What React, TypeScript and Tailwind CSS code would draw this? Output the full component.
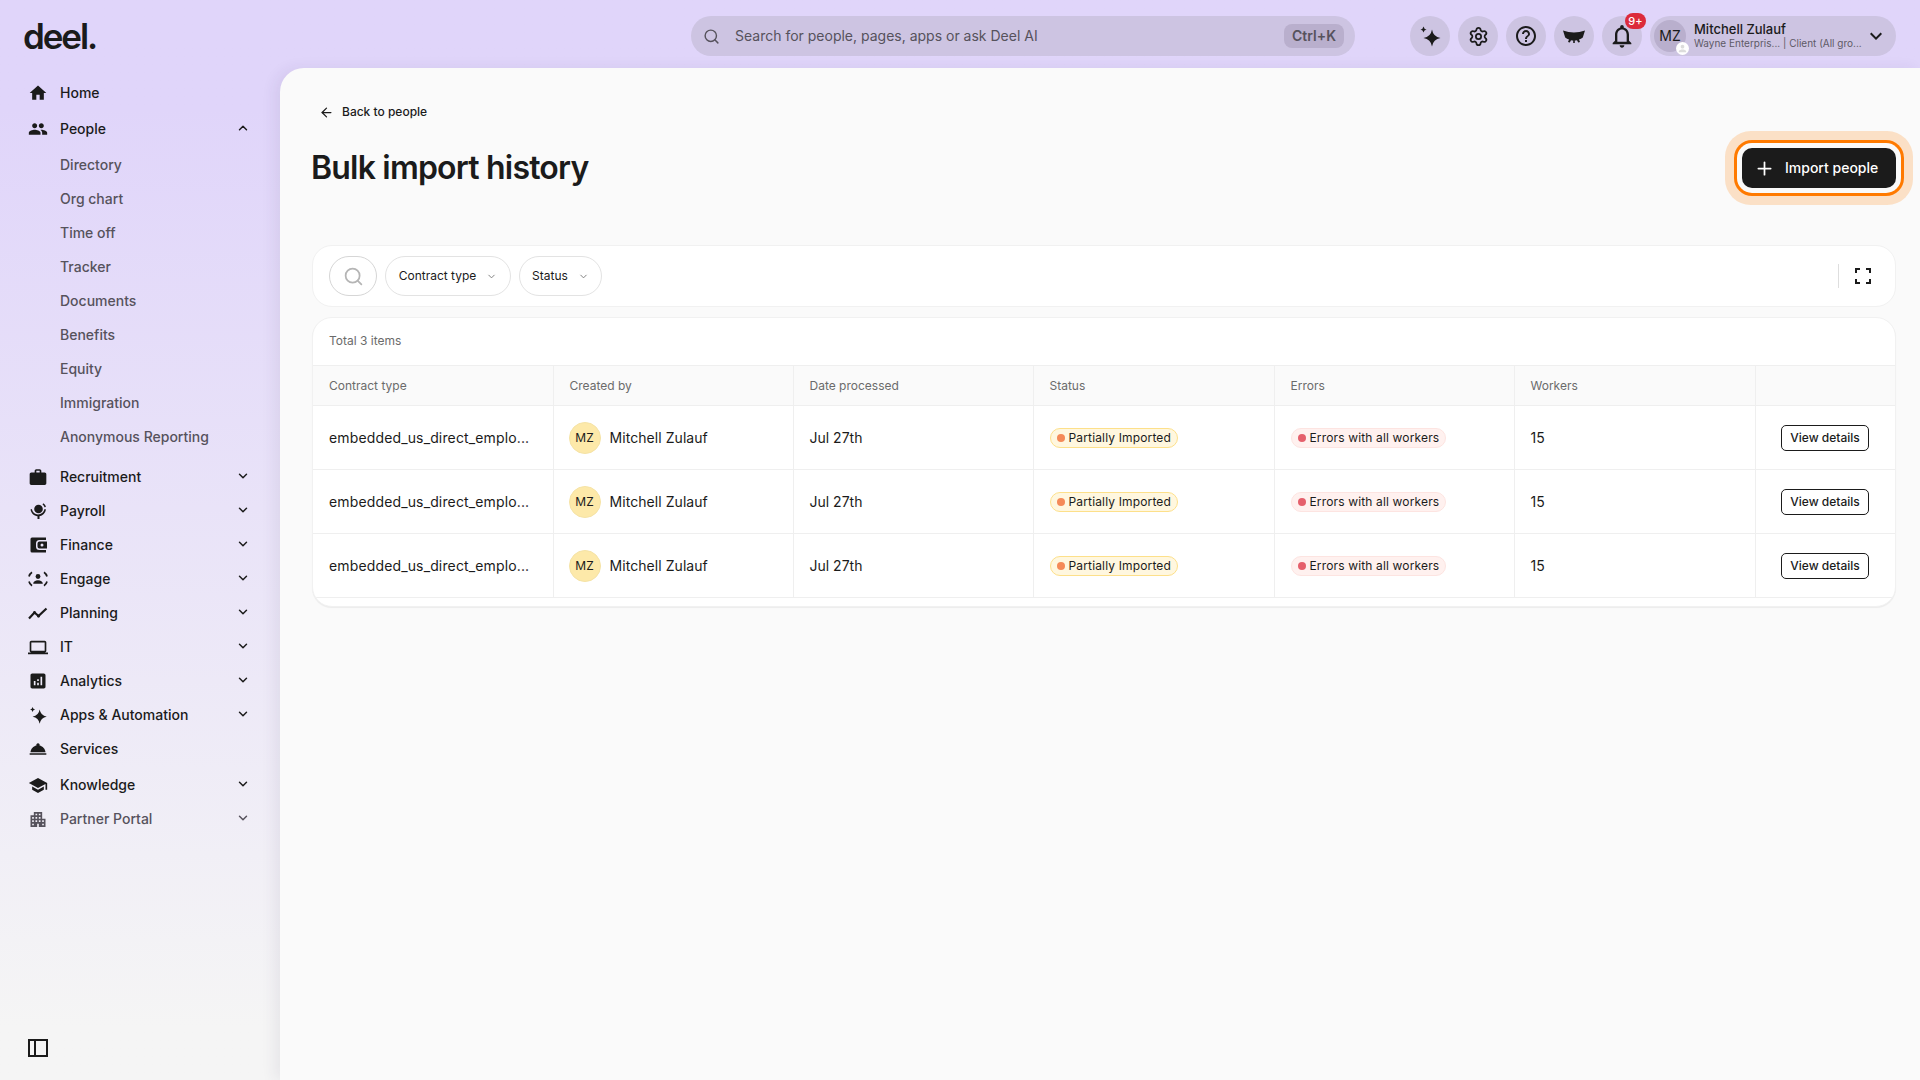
import React from "react";
import {
  MdHome,
  MdPeople,
  MdWork,
  MdLaptop,
  MdAnalytics,
  MdRoomService,
  MdSchool,
  MdApartment,
  MdHelpOutline,
  MdNotificationsNone,
  MdPerson,
  MdKeyboardArrowDown,
} from "react-icons/md";
import { ChevronDown, ChevronUp, Search, Settings, ArrowLeft, Plus } from "lucide-react";

const Sparkles = ({ size = 20 }: { size?: number }) => (
  <svg width={size} height={size} viewBox="0 0 24 24" fill="currentColor">
    <path d="M14 5.500Q15.200 12.800 22.500 14 15.200 15.200 14 22.500 12.800 15.200 5.500 14 12.800 12.800 14 5.500z" />
    <path d="M5.500 2.500Q6 5 8.500 5.500 6 6 5.500 8.500 5 6 2.500 5.500 5 5 5.500 2.500z" />
  </svg>
);

const PayrollIcon = () => (
  <svg width={20} height={20} viewBox="0 0 20 20" fill="currentColor">
    <circle cx="10.500" cy="8" r="4.300" />
    <path d="M2.500 8.500c.6 3.800 3.600 6.300 7 6.800V18h2v-2.700c3.300-.6 5.900-3 6.500-6.800l-1.500-.4c-.8 3.300-3.300 5.400-6.500 5.400-3.100 0-5.500-2-6.200-5.400z" />
    <path d="M15.200 2.300c1.400.8 2.400 2.100 2.700 3.700l-1.400.3c-.3-1.100-1-2.200-2-2.800z" />
  </svg>
);

const WalletIcon = () => (
  <svg width={20} height={20} viewBox="0 0 20 20" fill="currentColor">
    <path d="M4 2.500h14v2.500h-6.500A3.500 3.500 0 0 0 8 8.500v3a3.500 3.500 0 0 0 3.500 3.500H18v2.500H4A1.500 1.500 0 0 1 2.500 16V4A1.500 1.500 0 0 1 4 2.500z" />
    <path
      fillRule="evenodd"
      d="M11.500 6.500H19v7h-7.500a2 2 0 0 1-2-2v-3a2 2 0 0 1 2-2zm2.500 2a1.500 1.500 0 1 0 0 3 1.500 1.500 0 0 0 0-3z"
    />
  </svg>
);

const EngageIcon = () => (
  <svg width={20} height={20} viewBox="0 0 20 20" fill="none" stroke="currentColor" strokeWidth="1.700">
    <circle cx="10" cy="7.500" r="2.400" fill="currentColor" stroke="none" />
    <path d="M5.200 14.800c0-2.300 2.200-3.600 4.800-3.600s4.800 1.300 4.800 3.600z" fill="currentColor" stroke="none" />
    <path d="M1 7.500c.5-2 1.500-3.300 3-4.300M16 3.200c1.500 1 2.500 2.300 3 4.300M1 12.500c.5 2 1.500 3.300 3 4.300M16 16.800c1.500-1 2.500-2.300 3-4.300" />
  </svg>
);

const PlanningIcon = () => (
  <svg width={20} height={20} viewBox="0 0 20 20" fill="none" stroke="currentColor" strokeWidth="2.200">
    <path d="M1 15.500l5.500-6 4 3.500 8-7.500" />
    <circle cx="6.500" cy="9.500" r="1.500" fill="currentColor" stroke="none" />
    <circle cx="10.500" cy="13" r="1.500" fill="currentColor" stroke="none" />
  </svg>
);

const EyeLash = () => (
  <svg width={24} height={24} viewBox="0 0 24 24" fill="currentColor">
    <path d="M1 6.500Q12 10.500 23 6.500L20.800 13.500Q19 14.800 17 15.500L18 18 16.200 18.500 15 16.200Q13.500 16.600 12.800 16.600L12.800 19H11.200L11.200 16.600Q10 16.500 9 16.200L7.800 18.500 6 18 7 15.500Q5 14.800 3.200 13.500Z" />
  </svg>
);

const PanelIcon = () => (
  <svg width={20} height={20} viewBox="0 0 20 20" fill="none" stroke="currentColor" strokeWidth="2">
    <rect x="1" y="2" width="18" height="16" />
    <path d="M7 2v16" />
  </svg>
);

const FullscreenIcon = () => (
  <svg width={16} height={16} viewBox="0 0 16 16" fill="none" stroke="currentColor" strokeWidth="2">
    <path d="M1 5V1h4M11 1h4v4M15 11v4h-4M5 15H1v-4" />
  </svg>
);

const NavRow = ({
  icon,
  label,
  arrow,
  muted,
}: {
  icon: React.ReactNode;
  label: string;
  arrow?: "up" | "down";
  muted?: boolean;
}) => (
  <div className={`flex h-[34px] items-center pl-7 pr-[30px] ${muted ? "text-[#56525c]" : "text-[#1b1b1b]"}`}>
    <span className="flex w-5 justify-center">{icon}</span>
    <span className="ml-3 flex-1 text-sm font-medium">{label}</span>
    {arrow === "up" && <ChevronUp size={14} strokeWidth={2.5} className="-mt-[2px]" />}
    {arrow === "down" && <ChevronDown size={14} strokeWidth={2.5} className="-mt-[2px]" />}
  </div>
);

const subItems = [
  "Directory",
  "Org chart",
  "Time off",
  "Tracker",
  "Documents",
  "Benefits",
  "Equity",
  "Immigration",
  "Anonymous Reporting",
];

const Sidebar = () => (
  <aside className="flex w-[280px] shrink-0 flex-col pt-2 pb-[22px]">
    <NavRow icon={<MdHome size={24} />} label="Home" />
    <div className="mt-0.5">
      <NavRow icon={<MdPeople size={24} />} label="People" arrow="up" />
    </div>
    <div className="mt-0.5">
      {subItems.map((item) => (
        <div key={item} className="flex h-[34px] items-center pl-[60px] text-sm font-medium text-[#56525c]">
          {item}
        </div>
      ))}
    </div>
    <div className="mt-1.5">
      <NavRow icon={<MdWork size={21} />} label="Recruitment" arrow="down" />
      <NavRow icon={<PayrollIcon />} label="Payroll" arrow="down" />
      <NavRow icon={<WalletIcon />} label="Finance" arrow="down" />
      <NavRow icon={<EngageIcon />} label="Engage" arrow="down" />
      <NavRow icon={<PlanningIcon />} label="Planning" arrow="down" />
      <NavRow icon={<MdLaptop size={23} />} label="IT" arrow="down" />
      <NavRow icon={<MdAnalytics size={22} />} label="Analytics" arrow="down" />
      <NavRow icon={<Sparkles />} label="Apps & Automation" arrow="down" />
      <NavRow icon={<MdRoomService size={22} />} label="Services" />
    </div>
    <div className="mt-0.5">
      <NavRow icon={<MdSchool size={23} />} label="Knowledge" arrow="down" />
      <NavRow icon={<MdApartment size={21} />} label="Partner Portal" arrow="down" muted />
    </div>
    <div className="mt-auto pl-7 text-[#1b1b1b]">
      <PanelIcon />
    </div>
  </aside>
);

const RoundButton = ({ children }: { children: React.ReactNode }) => (
  <button className="relative flex h-10 w-10 items-center justify-center rounded-full bg-[#cdc4e2] text-[#1b1b1b]">
    {children}
  </button>
);

const TopBar = () => (
  <header className="flex h-[68px] shrink-0 items-start pt-4 pr-6 pl-6">
    <div className="-ml-px w-[668px] text-[35px] leading-10 font-semibold tracking-[-0.06em] text-[#1b1b1b]">deel.</div>
    <div className="flex h-10 w-[664px] items-center rounded-full bg-[#cdc4e2] pr-[11px] pl-[12px] text-[#56525c]">
      <Search size={17} strokeWidth={2} />
      <span className="ml-[15px] flex-1 text-sm">Search for people, pages, apps or ask Deel AI</span>
      <span className="flex h-6 w-[60px] items-center justify-center rounded-lg bg-[#b9afcd] text-sm font-semibold">
        Ctrl+K
      </span>
    </div>
    <div className="ml-auto flex items-center gap-2">
      <RoundButton>
        <Sparkles size={24} />
      </RoundButton>
      <RoundButton>
        <Settings size={21} strokeWidth={2} />
      </RoundButton>
      <RoundButton>
        <MdHelpOutline size={24} />
      </RoundButton>
      <RoundButton>
        <EyeLash />
      </RoundButton>
      <RoundButton>
        <MdNotificationsNone size={28} />
        <span className="absolute -top-[3px] left-[23px] flex h-4 w-[21px] items-center justify-center rounded-full bg-[#dc2b3b] text-[11px] font-medium text-white">
          9+
        </span>
      </RoundButton>
      <div className="relative flex h-10 w-[246px] items-center rounded-full bg-[#cdc4e2] pl-1 text-[#1b1b1b]">
        <span className="flex h-8 w-8 shrink-0 items-center justify-center rounded-full bg-[#b9afcd] text-sm">MZ</span>
        <span className="absolute top-[26px] left-[26px] flex h-[13px] w-[13px] items-center justify-center rounded-full bg-white text-[#dcdcdc]">
          <MdPerson size={11} />
        </span>
        <div className="-mt-px ml-2 w-[168px] shrink-0">
          <div className="text-[13px] leading-4 font-medium">Mitchell Zulauf</div>
          <div className="text-[10px] leading-[13px] whitespace-nowrap text-[#5e5a66]">Wayne Enterpris... | Client (All gro...</div>
        </div>
        <MdKeyboardArrowDown size={24} className="ml-[2px]" />
      </div>
    </div>
  </header>
);

const Th = ({ children, last }: { children?: React.ReactNode; last?: boolean }) => (
  <th className={`h-10 border-b border-[#efefef] px-4 text-left text-xs font-normal text-[#6b6b6b] ${last ? "" : "border-r"}`}>
    {children}
  </th>
);

const Td = ({ children, last }: { children?: React.ReactNode; last?: boolean }) => (
  <td className={`h-16 border-b border-[#efefef] px-4 text-sm text-[#1b1b1b] ${last ? "" : "border-r"}`}>{children}</td>
);

const Row = () => (
  <tr>
    <Td>
      <div className="whitespace-nowrap tracking-[0.14px]">embedded_us_direct_emplo...</div>
    </Td>
    <Td>
      <div className="-ml-px flex items-center gap-[9px] tracking-[0.06px]">
        <span className="flex h-8 w-8 items-center justify-center rounded-full border border-[#f5e3a6] bg-[#fde9a9] text-xs">
          MZ
        </span>
        Mitchell Zulauf
      </div>
    </Td>
    <Td>Jul 27th</Td>
    <Td>
      <span className="inline-flex h-5 items-center gap-1 rounded-full border border-[#fde08a] bg-[#fff7df] px-[6px] text-xs tracking-[0.15px]">
        <span className="h-2 w-2 rounded-full bg-[#f58a58]" />
        Partially Imported
      </span>
    </Td>
    <Td>
      <span className="inline-flex h-5 items-center gap-1 rounded-full border border-[#fde4e1] bg-[#fff1ef] px-[6px] text-xs tracking-[0.15px]">
        <span className="h-2 w-2 rounded-full bg-[#e5606c]" />
        Errors with all workers
      </span>
    </Td>
    <Td>15</Td>
    <Td last>
      <div className="flex justify-end pr-[10px]">
        <button className="flex h-[26px] w-[88px] items-center justify-center rounded-[5px] border border-[#1b1b1b] bg-white text-xs font-medium">
          View details
        </button>
      </div>
    </Td>
  </tr>
);

export default function App() {
  return (
    <div
      className="flex h-screen flex-col overflow-hidden bg-gradient-to-b from-[#e0d5fa] from-10% to-[#f5f5f5] to-95% text-[#1b1b1b]"
      style={{ fontFamily: "Inter, sans-serif" }}
    >
      <TopBar />
      <div className="flex min-h-0 flex-1">
        <Sidebar />
        <main className="flex-1 rounded-tl-3xl bg-[#fafafa] pt-[34px] pr-6 pl-8 shadow-[-6px_0_14px_rgba(60,40,90,0.07)]">
          <div className="flex h-5 items-center gap-2 pl-[7px] text-xs font-medium">
            <ArrowLeft size={15} strokeWidth={2} />
            Back to people
          </div>
          <div className="mt-3 flex h-[68px] items-center justify-between">
            <h1 className="-ml-px text-[32px] font-semibold tracking-[-0.025em]">Bulk import history</h1>
            <button className="flex h-10 w-[154px] items-center gap-[10px] rounded-[10px] bg-[#1b1b1b] pl-3 text-sm font-medium text-white shadow-[0_0_0_5px_#fafafa,0_0_0_8px_#ff7a00,0_0_0_17px_#fbe0c6]">
              <Plus size={21} strokeWidth={2} />
              Import people
            </button>
          </div>
          <div className="mt-[43px] flex h-[62px] items-center rounded-[20px] border border-[#f1f1f1] bg-white pr-4 pl-4">
            <div className="flex h-10 w-12 items-center justify-center rounded-full border border-[#d6d6d6] text-[#b5b5b5]">
              <Search size={21} strokeWidth={2} />
            </div>
            <button className="ml-2 flex h-10 w-[126px] items-center justify-center gap-[10px] rounded-full border border-[#e3e3e3] text-xs">
              Contract type
              <ChevronDown size={11} className="text-[#777]" />
            </button>
            <button className="ml-2 flex h-10 w-[83px] items-center justify-center gap-[10px] rounded-full border border-[#e3e3e3] text-xs">
              Status
              <ChevronDown size={11} className="text-[#777]" />
            </button>
            <div className="ml-auto flex items-center">
              <div className="h-6 w-px bg-[#dedede]" />
              <div className="mr-2 ml-4">
                <FullscreenIcon />
              </div>
            </div>
          </div>
          <div className="mt-[10px] overflow-hidden rounded-[20px] border border-[#f1f1f1] bg-white pb-2 shadow-[0_1px_1px_rgba(0,0,0,0.06)]">
            <div className="flex h-[47px] items-center pb-0.5 pl-4 text-xs text-[#6b6b6b]">Total 3 items</div>
            <table className="w-full table-fixed border-collapse">
              <colgroup>
                <col className="w-[240px]" />
                <col className="w-[240px]" />
                <col className="w-[240px]" />
                <col className="w-[241px]" />
                <col className="w-[240px]" />
                <col className="w-[241px]" />
                <col />
              </colgroup>
              <thead className="bg-[#fafafa]">
                <tr className="border-t border-[#efefef]">
                  <Th>Contract type</Th>
                  <Th>Created by</Th>
                  <Th>Date processed</Th>
                  <Th>Status</Th>
                  <Th>Errors</Th>
                  <Th>Workers</Th>
                  <Th last />
                </tr>
              </thead>
              <tbody>
                <Row />
                <Row />
                <Row />
              </tbody>
            </table>
          </div>
        </main>
      </div>
    </div>
  );
}
